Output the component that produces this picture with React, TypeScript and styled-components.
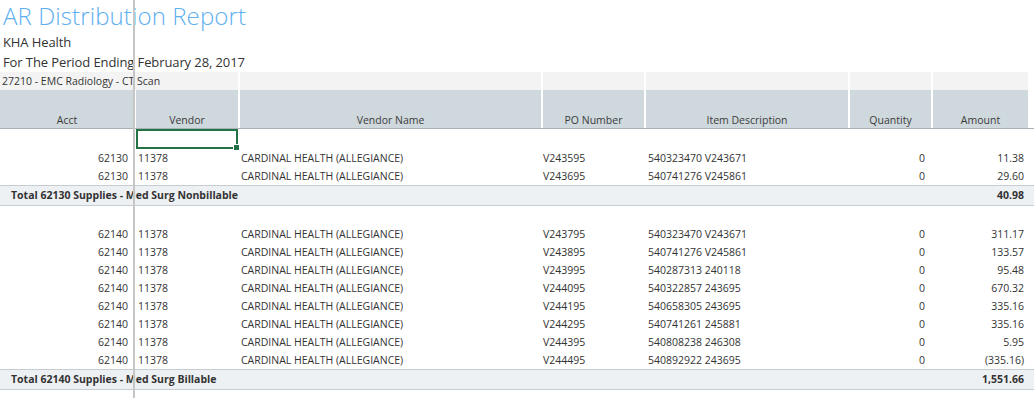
import React from 'react';
import styled, { createGlobalStyle } from 'styled-components';

const Global = createGlobalStyle`
  html, body { margin: 0; padding: 0; background: #fff; }
  body { font-family: "Open Sans", "Noto Sans", sans-serif; color: #333; }
`;

const COLS = '134px 102px 301px 101px 202px 81px 95px';

const Page = styled.div`
  position: relative;
  width: 1034px;
  height: 398px;
  overflow: hidden;
`;

const Heading = styled.header`
  display: flex;
  flex-direction: column;
  padding-left: 3px;
`;

const Title = styled.h1`
  margin: 0;
  font-weight: 300;
  font-size: 24px;
  line-height: 32px;
  color: #5eaff0;
  white-space: nowrap;
  letter-spacing: 0.1px;
`;

const SubLine = styled.div`
  font-size: 13px;
  line-height: 20px;
  letter-spacing: -0.1px;
  color: #333;
  white-space: nowrap;
`;

const Grid = styled.div`
  display: grid;
  grid-template-columns: ${COLS};
  column-gap: 2px;
`;

const Band = styled(Grid)`
  height: 18px;
`;

const BandCell = styled.div<{ $span?: number }>`
  background: #f3f3f3;
  grid-column: span ${(p) => p.$span ?? 1};
  font-size: 10.5px;
  line-height: 18px;
  padding-left: 2px;
  white-space: nowrap;
  color: #333;
`;

const HeaderRow = styled.div`
  width: 1034px;
  border-bottom: 1px solid #a9b1b6;
`;

const HeaderGrid = styled(Grid)`
  height: 38px;
`;

const HeadCell = styled.div`
  background: #cfd8dc;
  display: flex;
  align-items: flex-end;
  justify-content: center;
  font-size: 10.5px;
  line-height: 14px;
  padding-bottom: 1px;
  color: #3c3c3c;
`;

const DataRow = styled(Grid)<{ $h?: number }>`
  height: ${(p) => p.$h ?? 18}px;
  font-size: 10.5px;
  line-height: ${(p) => p.$h ?? 18}px;
  color: #333;
`;

const Cell = styled.div<{ $align?: 'left' | 'right'; $pad?: number }>`
  text-align: ${(p) => p.$align ?? 'left'};
  ${(p) => (p.$align === 'right' ? `padding-right: ${p.$pad ?? 4}px;` : `padding-left: ${p.$pad ?? 2}px;`)}
  white-space: nowrap;
  overflow: visible;
`;

const SelectedCell = styled.div`
  position: relative;
  box-sizing: border-box;
  border: 2px solid #217346;
`;

const Handle = styled.span`
  position: absolute;
  right: -4px;
  bottom: -4px;
  width: 5px;
  height: 5px;
  background: #217346;
  border: 1px solid #fff;
`;

const TotalRow = styled.div`
  width: 1034px;
  box-sizing: border-box;
  height: 21px;
  background: #eef1f3;
  border-top: 1px solid #c5cdd2;
  border-bottom: 1px solid #c5cdd2;
`;

const TotalGrid = styled(Grid)`
  height: 19px;
  font-size: 10.5px;
  line-height: 19px;
  font-weight: 700;
  color: #333;
`;

const TotalLabel = styled.div`
  grid-column: span 6;
  padding-left: 11px;
  white-space: nowrap;
`;

const Spacer = styled.div<{ $h: number }>`
  height: ${(p) => p.$h}px;
`;

const FreezeLine = styled.div`
  position: absolute;
  left: 133px;
  top: 0;
  bottom: 0;
  width: 2px;
  background: #c6c6c6;
`;

type Row = [string, string, string, string, string, string, string];

const group1: Row[] = [
  ['62130', '11378', 'CARDINAL HEALTH (ALLEGIANCE)', 'V243595', '540323470 V243671', '0', '11.38'],
  ['62130', '11378', 'CARDINAL HEALTH (ALLEGIANCE)', 'V243695', '540741276 V245861', '0', '29.60'],
];

const group2: Row[] = [
  ['62140', '11378', 'CARDINAL HEALTH (ALLEGIANCE)', 'V243795', '540323470 V243671', '0', '311.17'],
  ['62140', '11378', 'CARDINAL HEALTH (ALLEGIANCE)', 'V243895', '540741276 V245861', '0', '133.57'],
  ['62140', '11378', 'CARDINAL HEALTH (ALLEGIANCE)', 'V243995', '540287313 240118', '0', '95.48'],
  ['62140', '11378', 'CARDINAL HEALTH (ALLEGIANCE)', 'V244095', '540322857 243695', '0', '670.32'],
  ['62140', '11378', 'CARDINAL HEALTH (ALLEGIANCE)', 'V244195', '540658305 243695', '0', '335.16'],
  ['62140', '11378', 'CARDINAL HEALTH (ALLEGIANCE)', 'V244295', '540741261 245881', '0', '335.16'],
  ['62140', '11378', 'CARDINAL HEALTH (ALLEGIANCE)', 'V244395', '540808238 246308', '0', '5.95'],
  ['62140', '11378', 'CARDINAL HEALTH (ALLEGIANCE)', 'V244495', '540892922 243695', '0', '(335.16)'],
];

const headers = ['Acct', 'Vendor', 'Vendor Name', 'PO Number', 'Item Description', 'Quantity', 'Amount'];

function Line({ r }: { r: Row }) {
  return (
    <DataRow>
      <Cell $align="right" $pad={6}>{r[0]}</Cell>
      <Cell $pad={2}>{r[1]}</Cell>
      <Cell $pad={1}>{r[2]}</Cell>
      <Cell $pad={0}>{r[3]}</Cell>
      <Cell $pad={2}>{r[4]}</Cell>
      <Cell $align="right" $pad={6}>{r[5]}</Cell>
      <Cell $align="right" $pad={4}>{r[6]}</Cell>
    </DataRow>
  );
}

function Total({ label, amount }: { label: string; amount: string }) {
  return (
    <TotalRow>
      <TotalGrid>
        <TotalLabel>{label}</TotalLabel>
        <Cell $align="right" $pad={4}>{amount}</Cell>
      </TotalGrid>
    </TotalRow>
  );
}

export default function App() {
  return (
    <Page>
      <Global />
      <Heading>
        <Title>AR Distribution Report</Title>
        <SubLine>KHA Health</SubLine>
        <SubLine>For The Period Ending February 28, 2017</SubLine>
      </Heading>
      <Band>
        <BandCell $span={2}>27210 - EMC Radiology - CT Scan</BandCell>
        <BandCell />
        <BandCell />
        <BandCell />
        <BandCell />
        <BandCell />
      </Band>
      <HeaderRow>
        <HeaderGrid>
          {headers.map((h) => (
            <HeadCell key={h}>{h}</HeadCell>
          ))}
        </HeaderGrid>
      </HeaderRow>
      <DataRow $h={20}>
        <div />
        <SelectedCell>
          <Handle />
        </SelectedCell>
      </DataRow>
      {group1.map((r, i) => (
        <Line key={i} r={r} />
      ))}
      <Total label="Total 62130 Supplies - Med Surg Nonbillable" amount="40.98" />
      <Spacer $h={19} />
      {group2.map((r, i) => (
        <Line key={i} r={r} />
      ))}
      <Total label="Total 62140 Supplies - Med Surg Billable" amount="1,551.66" />
      <FreezeLine />
    </Page>
  );
}
